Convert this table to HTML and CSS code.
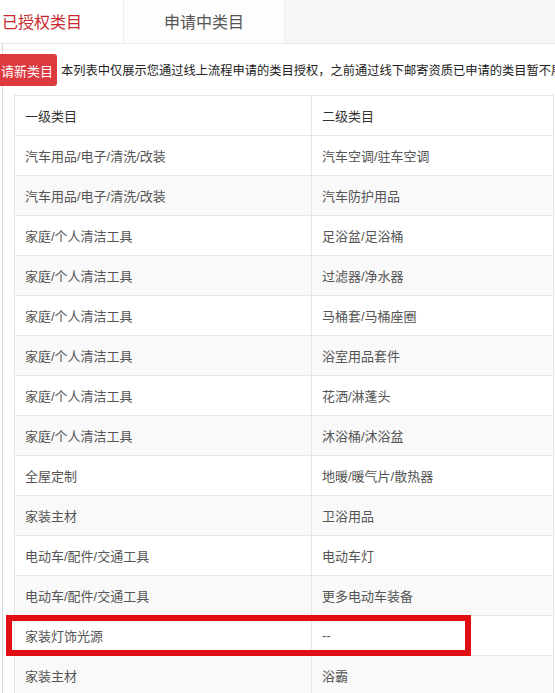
FILE: index.html
```html
<!DOCTYPE html>
<html lang="zh-CN">
<head>
<meta charset="utf-8">
<link rel="stylesheet" href="styles.css">
</head>
<body>
<div class="page">
  <div class="tabs">
    <div class="tab active">已授权类目</div>
    <div class="tab">申请中类目</div>
    <div class="tab-rest"></div>
  </div>
  <div class="toolbar">
    <button class="btn">申请新类目</button>
    <span class="notice">本列表中仅展示您通过线上流程申请的类目授权，之前通过线下邮寄资质已申请的类目暂不展示</span>
  </div>
  <table class="grid">
    <thead>
      <tr><th>一级类目</th><th>二级类目</th></tr>
    </thead>
    <tbody>
      <tr><td>汽车用品/电子/清洗/改装</td><td>汽车空调/驻车空调</td></tr>
      <tr><td>汽车用品/电子/清洗/改装</td><td>汽车防护用品</td></tr>
      <tr><td>家庭/个人清洁工具</td><td>足浴盆/足浴桶</td></tr>
      <tr><td>家庭/个人清洁工具</td><td>过滤器/净水器</td></tr>
      <tr><td>家庭/个人清洁工具</td><td>马桶套/马桶座圈</td></tr>
      <tr><td>家庭/个人清洁工具</td><td>浴室用品套件</td></tr>
      <tr><td>家庭/个人清洁工具</td><td>花洒/淋蓬头</td></tr>
      <tr><td>家庭/个人清洁工具</td><td>沐浴桶/沐浴盆</td></tr>
      <tr><td>全屋定制</td><td>地暖/暖气片/散热器</td></tr>
      <tr><td>家装主材</td><td>卫浴用品</td></tr>
      <tr><td>电动车/配件/交通工具</td><td>电动车灯</td></tr>
      <tr><td>电动车/配件/交通工具</td><td>更多电动车装备</td></tr>
      <tr><td>家装灯饰光源</td><td>--</td></tr>
      <tr><td>家装主材</td><td>浴霸</td></tr>
    </tbody>
  </table>
  <div class="highlight"></div>
</div>
</body>
</html>
```
FILE: styles.css
```css
html, body {
  margin: 0;
  padding: 0;
  background: #fff;
  overflow: hidden;
}
body {
  font-family: "Liberation Sans", "Noto Sans CJK SC", sans-serif;
  font-size: 13px;
  color: #555;
}
.page {
  position: relative;
  width: 555px;
  height: 693px;
  overflow: hidden;
  background: linear-gradient(to right, transparent 2px, #d8d8d8 2px, #d8d8d8 3px, transparent 3px);
}
.tabs {
  display: flex;
  height: 43px;
  border-bottom: 1px solid #ececec;
}
.tab {
  font-family: "Noto Sans CJK SC", sans-serif;
  font-size: 16px;
  line-height: 43px;
  color: #555;
  text-align: center;
  background: #fff;
}
.tab.active {
  width: 123px;
  text-align: left;
  padding-left: 2px;
  box-sizing: border-box;
  color: #c9282d;
}
.tab:nth-child(2) {
  width: 160px;
  border-left: 1px solid #ececec;
  border-right: 1px solid #ececec;
  background: #fdfdfd;
}
.tab-rest {
  flex: 1;
  background: #f6f6f6;
}
.toolbar {
  display: flex;
  align-items: center;
  height: 32px;
  margin-top: 10px;
  white-space: nowrap;
}
.btn {
  flex-shrink: 0;
  margin-left: -24px;
  height: 32px;
  padding: 0 4px 0 12px;
  border: none;
  border-radius: 3px;
  background: #dc3a3f;
  color: #fff;
  font-family: "Noto Sans CJK SC", sans-serif;
  font-size: 13px;
  white-space: nowrap;
}
.notice {
  margin-left: 4px;
  font-family: "Noto Sans CJK SC", sans-serif;
  font-size: 12.25px;
  color: #222;
}
.grid {
  margin-top: 9px;
  margin-left: 14px;
  width: 540px;
  border-collapse: collapse;
  table-layout: fixed;
}
.grid th, .grid td {
  height: 39px;
  padding: 0 10px;
  border: 1px solid #e6e6e6;
  text-align: left;
  font-weight: normal;
  white-space: nowrap;
}
.grid th:first-child, .grid td:first-child {
  width: 276px;
}
.grid th {
  color: #333;
}
.grid tbody tr:nth-child(even) td {
  background: #f9f9f9;
}
.highlight {
  position: absolute;
  left: 6px;
  top: 615px;
  width: 453px;
  height: 29px;
  border: 6px solid #e10f14;
}
```
